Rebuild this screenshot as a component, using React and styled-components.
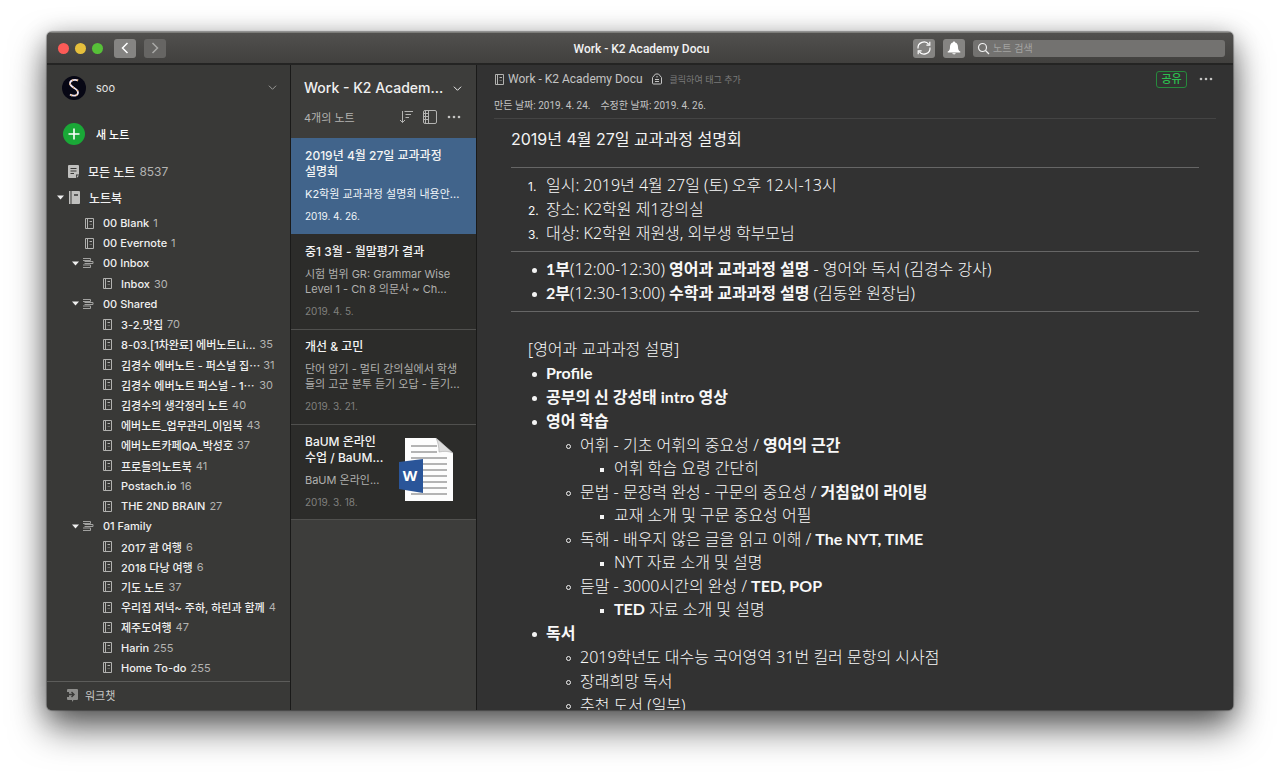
import React from "react";
import styled, { createGlobalStyle } from "styled-components";

const uiFont = `Inter, "Noto Sans CJK KR", sans-serif`;
const barFont = `Roboto, "Noto Sans CJK KR", sans-serif`;
const noteFont = `"Noto Sans", "Noto Sans CJK KR", sans-serif`;
const boldFont = `Lato, "Noto Sans CJK KR", sans-serif`;

const sideColor = "#393937";
const listColor = "#3d3d3b";
const cardColor = "#2c2c2a";
const noteColor = "#323232";
const lineColor = "#1a1a19";
const blue = "#41648b";
const green = "#2dbe4f";

const GlobalStyle = createGlobalStyle`
	*, *::before {
		box-sizing: border-box;
	}
	body {
		margin: 0;
		background-color: #fff;
		font-family: ${uiFont};
		font-size: 12px;
		color: #fff;
	}
	button {
		padding: 0;
		border: none;
		background: none;
		color: inherit;
		font-family: inherit;
		cursor: pointer;
	}
	a {
		color: inherit;
		text-decoration: none;
	}
	h1, h2, h3, p, ul, ol {
		margin: 0;
		padding: 0;
	}
	svg {
		display: block;
		flex-shrink: 0;
	}
`;

const Desktop = styled.div`
	height: 100vh;
	padding: 32px 47px 62px;
	overflow: hidden;
`;

const Window = styled.div`
	height: 100%;
	display: flex;
	flex-direction: column;
	border-radius: 5px;
	overflow: hidden;
	background-color: ${noteColor};
	box-shadow: 0 0 1px 1px rgba(0, 0, 0, 0.35), 0 18px 36px rgba(0, 0, 0, 0.6),
		0 4px 24px rgba(0, 0, 0, 0.25);
`;

const TitleBar = styled.header`
	height: 33px;
	flex-shrink: 0;
	display: grid;
	grid-template-columns: 1fr auto 1fr;
	align-items: center;
	padding: 0 8px 0 11px;
	background: linear-gradient(#51504e, #41403e);
	border-top: 1px solid #7d7d7a;
	border-bottom: 2px solid #242423;
`;

const BarLeft = styled.div`
	display: flex;
	align-items: center;
`;

const Lights = styled.div`
	display: flex;
	gap: 6px;
	margin-right: 11px;
`;

const Light = styled.button`
	width: 11px;
	height: 11px;
	border-radius: 100%;
	background-color: ${(props) => props.$color};
`;

const BarButton = styled.button`
	width: 22px;
	height: 19px;
	margin-right: 8px;
	display: flex;
	align-items: center;
	justify-content: center;
	border-radius: 3px;
	background-color: ${(props) => (props.$dim ? "#666563" : "#858482")};
	color: ${(props) => (props.$dim ? "#a9a9a7" : "#fff")};
`;

const WindowTitle = styled.h1`
	padding-top: 2px;
	font-family: ${barFont};
	font-size: 12px;
	line-height: 16px;
	font-weight: 500;
	color: #f2f2f2;
`;

const BarRight = styled.div`
	display: flex;
	align-items: center;
	justify-content: flex-end;
`;

const Search = styled.label`
	width: 252px;
	height: 17px;
	display: flex;
	align-items: center;
	gap: 3px;
	padding-left: 4px;
	border-radius: 3px;
	background-color: #737270;
	color: #f0f0f0;
`;

const SearchInput = styled.input`
	flex: 1;
	min-width: 0;
	padding: 0;
	border: none;
	outline: none;
	background: none;
	color: #fff;
	font-family: inherit;
	font-size: 10px;
	&::placeholder {
		color: #a3a3a1;
	}
`;

const Columns = styled.div`
	flex: 1;
	min-height: 0;
	display: grid;
	grid-template-columns: 244px 186px 1fr;
`;

const Sidebar = styled.nav`
	min-height: 0;
	display: flex;
	flex-direction: column;
	background-color: ${sideColor};
	border-right: 1px solid ${lineColor};
`;

const Account = styled.button`
	height: 45px;
	display: flex;
	align-items: center;
	gap: 10px;
	padding: 0 13px 0 15px;
	font-size: 11px;
	color: #e4e4e4;
`;

const AccountName = styled.span`
	flex: 1;
	text-align: left;
`;

const AccountChevron = styled.span`
	color: #9a9a98;
`;

const NewNote = styled.button`
	height: 48px;
	display: flex;
	align-items: center;
	gap: 11px;
	padding-left: 16px;
	font-size: 11px;
	font-weight: 500;
`;

const Plus = styled.span`
	width: 22px;
	height: 22px;
	display: flex;
	align-items: center;
	justify-content: center;
	border-radius: 100%;
	background-color: #1aa837;
`;

const MainRow = styled.a`
	height: 26px;
	display: flex;
	align-items: center;
	padding-left: ${(props) => (props.$open ? 10 : 21)}px;
	font-weight: 500;
	color: #f0f0f0;
	svg {
		margin-right: ${(props) => (props.$open ? 5 : 9)}px;
	}
	svg + svg {
		margin-right: 9px;
	}
`;

const Books = styled.ul`
	flex: 1;
	min-height: 0;
	display: flex;
	flex-direction: column;
	justify-content: space-between;
	padding: 3px 0 3px;
	list-style: none;
`;

const BookRow = styled.a`
	height: 20px;
	display: flex;
	align-items: center;
	padding: 0 17px 0 ${(props) => props.$indent}px;
	font-size: 11px;
	font-weight: 500;
	white-space: nowrap;
	color: #f0f0f0;
`;

const BookName = styled.span`
	margin-left: 9px;
`;

const Count = styled.span`
	margin-left: ${(props) => (props.$far ? "auto" : "4px")};
	padding-left: ${(props) => (props.$far ? 3 : 0)}px;
	font-weight: 400;
	color: #b4b4b2;
`;

const WorkChat = styled.a`
	height: 29px;
	flex-shrink: 0;
	display: flex;
	align-items: center;
	gap: 7px;
	padding: 0 0 2px 20px;
	border-top: 1px solid #5c5c5a;
	font-size: 11px;
	color: #c8c8c6;
`;

const NoteList = styled.section`
	min-width: 0;
	min-height: 0;
	background-color: ${listColor};
	border-right: 1px solid ${lineColor};
`;

const ListHead = styled.div`
	height: 73px;
	padding: 13px 14px 0 13px;
`;

const ListTitle = styled.button`
	width: 100%;
	display: flex;
	align-items: center;
	justify-content: space-between;
	font-size: 14px;
	line-height: 20px;
	font-weight: 500;
	color: #f0f0f0;
`;

const ListTools = styled.div`
	height: 20px;
	margin: 9px 1px 0 0;
	display: flex;
	align-items: center;
	gap: 10px;
	font-size: 11px;
	color: #b4b4b2;
`;

const ListCount = styled.span`
	flex: 1;
`;

const Card = styled.article`
	height: ${(props) => (props.$active ? 97 : 95)}px;
	display: flex;
	padding: ${(props) => (props.$active ? 10 : 9)}px 10px 0 14px;
	background-color: ${(props) => (props.$active ? blue : cardColor)};
	border-bottom: 1px solid ${(props) => (props.$active ? cardColor : "#50504e")};
`;

const CardText = styled.div`
	flex: 1;
	min-width: 0;
`;

const CardTitle = styled.h3`
	font-size: 12px;
	line-height: 16px;
	font-weight: 500;
	white-space: nowrap;
	color: #f4f4f4;
`;

const CardBody = styled.p`
	margin-top: 7px;
	font-size: 11px;
	line-height: 15px;
	white-space: nowrap;
	color: ${(props) => (props.$active ? "#f0f4f8" : "#b0b0ae")};
`;

const CardDate = styled.p`
	margin-top: 7px;
	font-size: 10px;
	line-height: 15px;
	color: ${(props) => (props.$active ? "#f0f4f8" : "#80807e")};
`;

const Attachment = styled.div`
	padding: 3px 11px 0 0;
`;

const Editor = styled.main`
	min-width: 0;
	min-height: 0;
	overflow: hidden;
	background-color: ${noteColor};
`;

const EditorHead = styled.div`
	margin: 0 17px;
	height: 54px;
	border-bottom: 1px solid #444;
`;

const HeadRow = styled.div`
	height: 28px;
	display: flex;
	align-items: center;
	padding: 0 3px 0 1px;
	color: #c4c4c4;
`;

const NotebookLink = styled.button`
	display: flex;
	align-items: center;
	gap: 4px;
	margin-right: 9px;
	font-family: ${barFont};
	font-size: 12px;
`;

const TagInput = styled.input`
	flex: 1;
	min-width: 0;
	margin-left: 8px;
	padding: 0;
	border: none;
	outline: none;
	background: none;
	color: #fff;
	font-family: inherit;
	font-size: 9px;
	&::placeholder {
		color: #7a7a7a;
	}
`;

const Share = styled.button`
	width: 31px;
	height: 17px;
	margin-right: 12px;
	border: 1px solid #268a3c;
	border-radius: 3px;
	font-size: 11px;
	line-height: 15px;
	font-weight: 500;
	color: ${green};
`;

const Dates = styled.div`
	display: flex;
	gap: 10px;
	padding-top: 5px;
	font-family: ${barFont};
	font-size: 10px;
	line-height: 16px;
	color: #c4c4c4;
`;

const NoteBody = styled.div`
	margin: 0 34px;
	font-family: ${noteFont};
	font-size: 16px;
	font-weight: 300;
	line-height: 24px;
	color: #f8f8f8;
	white-space: nowrap;
	b {
		font-family: ${boldFont};
		font-weight: 700;
		line-height: 16px;
	}
`;

const NoteTitle = styled.h2`
	padding: 8px 0 16px;
	font-family: ${uiFont};
	font-size: 16px;
	line-height: 24px;
	font-weight: 400;
	color: #f4f4f4;
`;

const Section = styled.div`
	padding: 5px 0 6px;
	border-top: 1px solid #666;
`;

const Numbers = styled.ol`
	padding-left: 35px;
	list-style: none;
	counter-reset: item;
	li {
		counter-increment: item;
	}
	li::before {
		content: counter(item) ".";
		display: inline-block;
		width: 18px;
		margin-left: -18px;
		font-family: ${uiFont};
		font-size: 12px;
		font-weight: 400;
		line-height: 16px;
	}
`;

const marks = {
	disc: "border-radius: 100%; background-color: #f4f4f4;",
	circle: "border-radius: 100%; border: 1px solid #f4f4f4;",
	square: "background-color: #f4f4f4;",
};

const Bullets = styled.ul`
	padding-left: ${(props) => (props.$nested ? 34 : 35)}px;
	list-style: none;
	line-height: ${(props) => (props.$mark === "square" ? 23 : 24)}px;
	> li::before {
		content: "";
		display: inline-block;
		width: ${(props) => (props.$mark === "square" ? 4 : 5)}px;
		height: ${(props) => (props.$mark === "square" ? 4 : 5)}px;
		margin: 0 ${(props) => (props.$mark === "square" ? 10 : 9)}px 2px -14px;
		${(props) => marks[props.$mark || "disc"]}
	}
`;

const Label = styled.p`
	padding: 20px 0 0 17px;
`;

const Chevron = ({ size = 9 }) => (
	<svg width={size} height={size} viewBox="0 0 10 10" fill="none" stroke="currentColor" strokeWidth="1.1">
		<path d="M1 3l4 4 4-4" />
	</svg>
);

const Arrow = ({ back }) => (
	<svg width="8" height="12" viewBox="0 0 8 12" fill="none" stroke="currentColor" strokeWidth="1.5">
		<path d={back ? "M6.5 1L1.5 6l5 5" : "M1.5 1l5 5-5 5"} />
	</svg>
);

const Triangle = () => (
	<svg width="7" height="5" viewBox="0 0 7 5" fill="#f0f0f0">
		<path d="M0 .5h7L3.5 4.5z" />
	</svg>
);

const Dots = () => (
	<svg width="14" height="4" viewBox="0 0 14 4" fill="#c4c4c2">
		<circle cx="2" cy="2" r="1.3" />
		<circle cx="7" cy="2" r="1.3" />
		<circle cx="12" cy="2" r="1.3" />
	</svg>
);

const BookIcon = () => (
	<svg width="9" height="11" viewBox="0 0 9 11" fill="none" stroke="#b2b2b0">
		<path d="M.5.5h8v10h-8zM2.5.5v10M4.5 3.5H7" />
		<path d="M4.5 6.5H7" stroke="#6a6a68" />
	</svg>
);

const StackIcon = () => (
	<svg width="11" height="10" viewBox="0 0 11 10" fill="none" stroke="#a2a2a0">
		<path d="M0 .5h7.5v2H0M1.5 3.5H10v2H1.5M0 7h7.5v2.5H0" />
	</svg>
);

const AllNotesIcon = () => (
	<svg width="11" height="13" viewBox="0 0 11 13">
		<path d="M1 0h9a1 1 0 0 1 1 1v8.5H8V13H1a1 1 0 0 1-1-1V1a1 1 0 0 1 1-1z" fill="#c0c0be" />
		<path d="M8.8 10.5H11L8.8 13z" fill="#c0c0be" />
		<path d="M2.5 3.5h6M2.5 6h6M2.5 8.5H6" stroke={sideColor} />
	</svg>
);

const NotebookIcon = () => (
	<svg width="11" height="13" viewBox="0 0 11 13">
		<path d="M0 0h1.5v13H0zM2.5 0H10a1 1 0 0 1 1 1v11a1 1 0 0 1-1 1H2.5z" fill="#c0c0be" />
		<path d="M5 4h4" stroke={sideColor} strokeWidth="1.5" />
	</svg>
);

const ChatIcon = () => (
	<svg width="11" height="13" viewBox="0 0 11 13">
		<path d="M1 0h9a1 1 0 0 1 1 1v9a1 1 0 0 1-1 1H6.5L5 13V11H1a1 1 0 0 1-1-1V8h2V3H0V1a1 1 0 0 1 1-1z" fill="#8e8e8c" />
		<path d="M0 5.5h6M4.5 3L7 5.5 4.5 8" fill="none" stroke={sideColor} strokeWidth="1.4" />
	</svg>
);

const Avatar = () => (
	<svg width="24" height="24" viewBox="0 0 24 24" fill="none">
		<circle cx="12" cy="12" r="12" fill="#070714" />
		<path
			d="M16 4.5C13 3 8 4 8 7.5c0 4 8 4.500 8 9 0 3.500-5 4-8 2"
			stroke="#efe4f4"
			strokeWidth="1.8"
		/>
		<path
			d="M16 4.5C13 3 8 4 8 7.5c0 4 8 4.500 8 9 0 3.500-5 4-8 2"
			stroke="#e8b06a"
			strokeWidth="1.8"
			strokeDasharray="1 4"
		/>
	</svg>
);

const SyncIcon = () => (
	<svg width="16" height="16" viewBox="0 0 16 16" fill="none" stroke="#fff" strokeWidth="1.2">
		<path d="M2 8.5A6 6 0 0 1 12.8 4.4M14 7.5A6 6 0 0 1 3.2 11.6" />
		<path d="M13.8 1.8v3.4h-3.4M2.2 14.2v-3.4h3.4" />
	</svg>
);

const BellIcon = () => (
	<svg width="14" height="14" viewBox="0 0 14 14" fill="#fff">
		<path d="M7 .5c.7 0 1.1.5 1.1 1.1C10.2 2.1 11 4 11 6c0 2.8.8 3.8 2.3 4.5v1H.7v-1C2.200 9.800 3 8.800 3 6c0-2 .8-3.900 2.900-4.400C5.900 1 6.300.5 7 .5zM5.300 12.200h3.400c-.3 1.600-3.100 1.600-3.400 0z" />
	</svg>
);

const SearchIcon = () => (
	<svg width="13" height="13" viewBox="0 0 13 13" fill="none" stroke="currentColor" strokeWidth="1.2">
		<circle cx="5.5" cy="5.5" r="4" />
		<path d="M8.5 8.5L12 12" />
	</svg>
);

const SortIcon = () => (
	<svg width="14" height="14" viewBox="0 0 14 14" fill="none" stroke="#b4b4b2">
		<path d="M3.5 1v11.5M1 10l2.5 2.5L6 10M5.5 1.5H14M6.5 4.5H12M6.5 7.5H10" />
	</svg>
);

const LayoutIcon = () => (
	<svg width="14" height="14" viewBox="0 0 14 14" fill="none" stroke="#b4b4b2">
		<rect x=".5" y=".5" width="13" height="13" rx="1.5" />
		<path d="M5.5.5v13M2.5.5v13M.5 3.5h5M.5 6.5h5M.5 9.5h5" />
	</svg>
);

const TagIcon = () => (
	<svg width="10" height="12" viewBox="0 0 10 12" fill="none" stroke="currentColor">
		<path d="M.5 4.5L3.5 1h3l3 3.5V10a1 1 0 0 1-1 1h-7a1 1 0 0 1-1-1zM3 6.5h4M3 8.5h4M5 3v1.5" />
	</svg>
);

const WordDoc = () => (
	<svg width="56" height="66" viewBox="0 0 56 66">
		<path d="M6 1h31l17 15v48H6z" fill="#fdfdfd" />
		<path
			d="M12 9h26M12 15h26M12 21h36M12 27h36M12 33h36M12 39h36M12 45h36M12 51h36M12 57h36"
			stroke="#b4b4b4"
			strokeWidth="2"
		/>
		<path d="M37 1l17 15c-5-2-9-2-14-1 0-5-1-10-3-14z" fill="#dcdcdc" stroke="#9a9a9a" strokeWidth=".5" />
		<path d="M0 25l24-3v34L0 52z" fill="#2a5599" />
		<text x="11" y="44" textAnchor="middle" fontFamily="Open Sans" fontWeight="700" fontSize="15" fill="#fff">
			W
		</text>
	</svg>
);

const books = [
	{ name: "00 Blank", count: 1, top: true },
	{ name: "00 Evernote", count: 1, top: true },
	{ name: "00 Inbox", group: true },
	{ name: "Inbox", count: 30 },
	{ name: "00 Shared", group: true },
	{ name: "3-2.맛집", count: 70 },
	{ name: "8-03.[1차완료] 에버노트Li...", count: 35, far: true },
	{ name: "김경수 에버노트 - 퍼스널 집⋯", count: 31, far: true },
	{ name: "김경수 에버노트 퍼스널 - 1⋯", count: 30, far: true },
	{ name: "김경수의 생각정리 노트", count: 40 },
	{ name: "에버노트_업무관리_이임복", count: 43 },
	{ name: "에버노트카페QA_박성호", count: 37 },
	{ name: "프로들의노트북", count: 41 },
	{ name: "Postach.io", count: 16 },
	{ name: "THE 2ND BRAIN", count: 27 },
	{ name: "01 Family", group: true },
	{ name: "2017 괌 여행", count: 6 },
	{ name: "2018 다낭 여행", count: 6 },
	{ name: "기도 노트", count: 37 },
	{ name: "우리집 저녁~ 주하, 하린과 함께", count: 4 },
	{ name: "제주도여행", count: 47 },
	{ name: "Harin", count: 255 },
	{ name: "Home To-do", count: 255 },
];

const notes = [
	{
		title: ["2019년 4월 27일 교과과정", "설명회"],
		body: ["K2학원 교과과정 설명회 내용안..."],
		date: "2019. 4. 26.",
		active: true,
	},
	{
		title: ["중1 3월 - 월말평가 결과"],
		body: ["시험 범위 GR: Grammar Wise", "Level 1 - Ch 8 의문사 ~ Ch..."],
		date: "2019. 4. 5.",
	},
	{
		title: ["개선 & 고민"],
		body: ["단어 암기 - 멀티 강의실에서 학생", "들의 고군 분투 듣기 오답 - 듣기..."],
		date: "2019. 3. 21.",
	},
	{
		title: ["BaUM 온라인", "수업 / BaUM..."],
		body: ["BaUM 온라인..."],
		date: "2019. 3. 18.",
		doc: true,
	},
];

const Lines = ({ items }) =>
	items.map((line) => (
		<React.Fragment key={line}>
			{line}
			<br />
		</React.Fragment>
	));

const bookIndent = (book) => {
	if (book.group) return 25;
	return book.top ? 38 : 56;
};

const GroupMark = styled.span`
	display: flex;
	align-items: center;
	gap: 4px;
`;

const Book = ({ book }) => (
	<li>
		<BookRow href="#" $indent={bookIndent(book)}>
			{book.group ? (
				<GroupMark>
					<Triangle />
					<StackIcon />
				</GroupMark>
			) : (
				<BookIcon />
			)}
			<BookName>{book.name}</BookName>
			{book.count && <Count $far={book.far}>{book.count}</Count>}
		</BookRow>
	</li>
);

const SidePanel = () => (
	<Sidebar>
		<Account>
			<Avatar />
			<AccountName>soo</AccountName>
			<AccountChevron>
				<Chevron />
			</AccountChevron>
		</Account>
		<NewNote>
			<Plus>
				<svg width="12" height="12" viewBox="0 0 12 12" stroke="#fff" strokeWidth="1.6">
					<path d="M6 .5v11M.5 6h11" />
				</svg>
			</Plus>
			새 노트
		</NewNote>
		<MainRow href="#">
			<AllNotesIcon />
			모든 노트 <Count>8537</Count>
		</MainRow>
		<MainRow href="#" $open>
			<Triangle />
			<NotebookIcon />
			노트북
		</MainRow>
		<Books>
			{books.map((book) => (
				<Book key={book.name} book={book} />
			))}
		</Books>
		<WorkChat href="#">
			<ChatIcon />
			워크챗
		</WorkChat>
	</Sidebar>
);

const ListPanel = () => (
	<NoteList>
		<ListHead>
			<ListTitle>
				Work - K2 Academ...
				<Chevron />
			</ListTitle>
			<ListTools>
				<ListCount>4개의 노트</ListCount>
				<SortIcon />
				<LayoutIcon />
				<Dots />
			</ListTools>
		</ListHead>
		{notes.map((note) => (
			<Card key={note.date} $active={note.active}>
				<CardText>
					<CardTitle>
						<Lines items={note.title} />
					</CardTitle>
					<CardBody $active={note.active}>
						<Lines items={note.body} />
					</CardBody>
					<CardDate $active={note.active}>{note.date}</CardDate>
				</CardText>
				{note.doc && (
					<Attachment>
						<WordDoc />
					</Attachment>
				)}
			</Card>
		))}
	</NoteList>
);

const NotePanel = () => (
	<Editor>
		<EditorHead>
			<HeadRow>
				<NotebookLink>
					<BookIcon />
					Work - K2 Academy Docu
				</NotebookLink>
				<TagIcon />
				<TagInput aria-label="태그" placeholder="클릭하여 태그 추가" />
				<Share>공유</Share>
				<Dots />
			</HeadRow>
			<Dates>
				<span>만든 날짜: 2019. 4. 24.</span>
				<span>수정한 날짜: 2019. 4. 26.</span>
			</Dates>
		</EditorHead>
		<NoteBody>
			<NoteTitle>2019년 4월 27일 교과과정 설명회</NoteTitle>
			<Section>
				<Numbers>
					<li>일시: 2019년 4월 27일 (토) 오후 12시-13시</li>
					<li>장소: K2학원 제1강의실</li>
					<li>대상: K2학원 재원생, 외부생 학부모님</li>
				</Numbers>
			</Section>
			<Section>
				<Bullets>
					<li>
						<b>1부</b>(12:00-12:30) <b>영어과 교과과정 설명</b> - 영어와 독서 (김경수 강사)
					</li>
					<li>
						<b>2부</b>(12:30-13:00) <b>수학과 교과과정 설명</b> (김동완 원장님)
					</li>
				</Bullets>
			</Section>
			<Section>
				<Label>[영어과 교과과정 설명]</Label>
				<Bullets>
					<li>
						<b>Profile</b>
					</li>
					<li>
						<b>공부의 신 강성태 intro 영상</b>
					</li>
					<li>
						<b>영어 학습</b>
						<Bullets $nested $mark="circle">
							<li>
								어휘 - 기초 어휘의 중요성 / <b>영어의 근간</b>
								<Bullets $nested $mark="square">
									<li>어휘 학습 요령 간단히</li>
								</Bullets>
							</li>
							<li>
								문법 - 문장력 완성 - 구문의 중요성 / <b>거침없이 라이팅</b>
								<Bullets $nested $mark="square">
									<li>교재 소개 및 구문 중요성 어필</li>
								</Bullets>
							</li>
							<li>
								독해 - 배우지 않은 글을 읽고 이해 / <b>The NYT, TIME</b>
								<Bullets $nested $mark="square">
									<li>NYT 자료 소개 및 설명</li>
								</Bullets>
							</li>
							<li>
								듣말 - 3000시간의 완성 / <b>TED, POP</b>
								<Bullets $nested $mark="square">
									<li>
										<b>TED</b> 자료 소개 및 설명
									</li>
								</Bullets>
							</li>
						</Bullets>
					</li>
					<li>
						<b>독서</b>
						<Bullets $nested $mark="circle">
							<li>2019학년도 대수능 국어영역 31번 킬러 문항의 시사점</li>
							<li>장래희망 독서</li>
							<li>추천 도서 (일부)</li>
						</Bullets>
					</li>
				</Bullets>
			</Section>
		</NoteBody>
	</Editor>
);

export default () => {
	return (
		<Desktop>
			<GlobalStyle />
			<Window>
				<TitleBar>
					<BarLeft>
						<Lights>
							<Light $color="#fc5b57" aria-label="닫기" />
							<Light $color="#e5bf3c" aria-label="최소화" />
							<Light $color="#57c038" aria-label="확대" />
						</Lights>
						<BarButton aria-label="뒤로">
							<Arrow back />
						</BarButton>
						<BarButton $dim aria-label="앞으로">
							<Arrow />
						</BarButton>
					</BarLeft>
					<WindowTitle>Work - K2 Academy Docu</WindowTitle>
					<BarRight>
						<BarButton aria-label="동기화">
							<SyncIcon />
						</BarButton>
						<BarButton aria-label="알림">
							<BellIcon />
						</BarButton>
						<Search>
							<SearchIcon />
							<SearchInput aria-label="노트 검색" placeholder="노트 검색" />
						</Search>
					</BarRight>
				</TitleBar>
				<Columns>
					<SidePanel />
					<ListPanel />
					<NotePanel />
				</Columns>
			</Window>
		</Desktop>
	);
};
